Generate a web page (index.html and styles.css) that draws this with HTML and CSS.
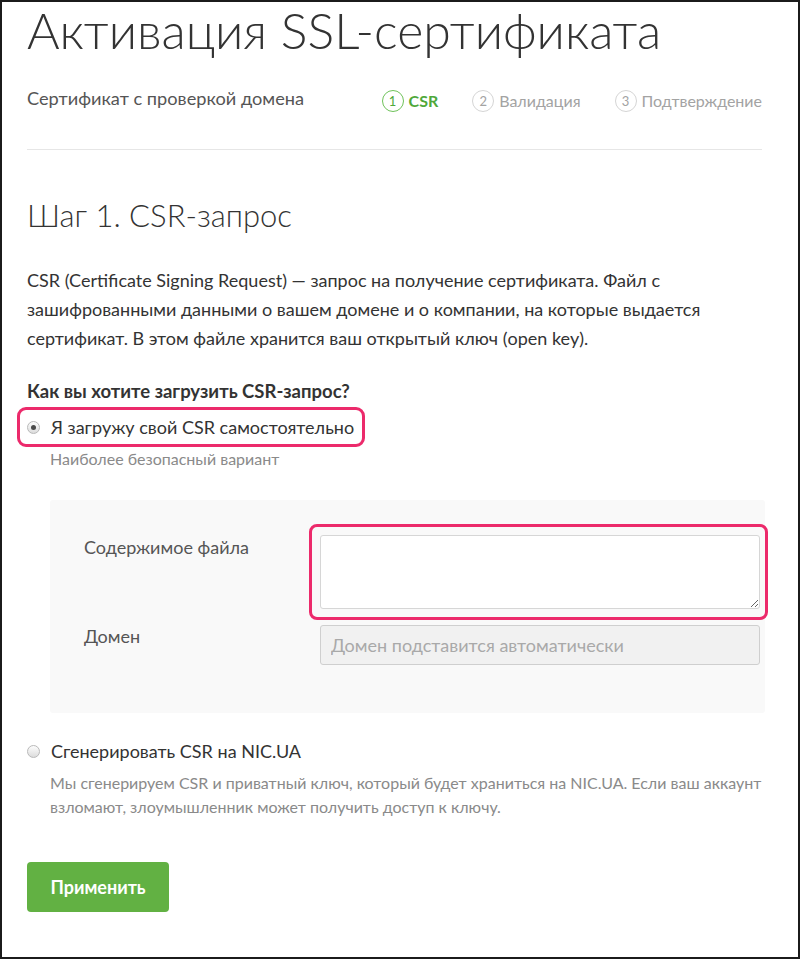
FILE: index.html
```html
<!DOCTYPE html>
<html lang="ru">
<head>
<meta charset="utf-8">
<title>Активация SSL-сертификата</title>
<link rel="stylesheet" href="styles.css">
</head>
<body>
<div class="frame">
  <h1 class="title">Активация SSL-сертификата</h1>
  <div class="subhead">
    <div class="subtitle">Сертификат с проверкой домена</div>
    <ol class="steps">
      <li class="step active"><span class="num">1</span><span class="label">CSR</span></li>
      <li class="step"><span class="num">2</span><span class="label">Валидация</span></li>
      <li class="step"><span class="num">3</span><span class="label">Подтверждение</span></li>
    </ol>
  </div>
  <hr class="divider">
  <h2 class="step-title">Шаг 1. CSR-запрос</h2>
  <p class="intro">CSR (Certificate Signing Request) — запрос на получение сертификата. Файл с зашифрованными данными о вашем домене и о компании, на которые выдается сертификат. В этом файле хранится ваш открытый ключ (open key).</p>
  <div class="question">Как вы хотите загрузить CSR-запрос?</div>

  <div class="option">
    <label class="choice highlighted"><span class="radio checked"></span><span class="choice-text">Я загружу свой CSR самостоятельно</span></label>
    <div class="hint">Наиболее безопасный вариант</div>
  </div>

  <div class="panel">
    <div class="field">
      <div class="field-label">Содержимое файла</div>
      <div class="field-control mark">
        <textarea class="textarea"></textarea>
      </div>
    </div>
    <div class="field">
      <div class="field-label domain-label">Домен</div>
      <div class="field-control">
        <input class="input" type="text" placeholder="Домен подставится автоматически" disabled>
      </div>
    </div>
  </div>

  <div class="option option-gen">
    <label class="choice"><span class="radio"></span><span class="choice-text">Сгенерировать CSR на NIC.UA</span></label>
    <div class="hint hint-long">Мы сгенерируем CSR и приватный ключ, который будет храниться на NIC.UA. Если ваш аккаунт взломают, злоумышленник может получить доступ к ключу.</div>
  </div>

  <button class="btn" type="button">Применить</button>
</div>
</body>
</html>
```
FILE: styles.css
```css
html, body {
  margin: 0;
  padding: 0;
  background: #fff;
}
body {
  font-family: Lato, "Open Sans", sans-serif;
  color: #333;
}
.frame {
  box-sizing: border-box;
  width: 800px;
  height: 959px;
  border: 2px solid #1b1b1b;
  padding: 0 36px 0 25px;
  overflow: hidden;
}
.title {
  margin: 0;
  font-weight: 300;
  font-size: 50px;
  line-height: 57px;
  color: #333;
}
.subhead {
  display: flex;
  align-items: flex-start;
  justify-content: space-between;
  margin-top: 28px;
}
.subtitle {
  font-size: 18.2px;
  line-height: 22px;
  color: #555;
}
.steps {
  list-style: none;
  margin: 3px 0 0;
  padding: 0;
  display: flex;
  gap: 34px;
}
.step {
  display: flex;
  align-items: center;
  gap: 5px;
  font-size: 16px;
  line-height: 22px;
  color: #a3a3a3;
}
.num {
  box-sizing: border-box;
  width: 22px;
  height: 22px;
  border: 1px solid #d5d5d5;
  border-radius: 50%;
  display: flex;
  align-items: center;
  justify-content: center;
  font-size: 13px;
  color: #a3a3a3;
}
.step.active .num {
  border-color: #6fc25a;
  color: #4fa83a;
}
.step.active .label {
  color: #4fa83a;
  font-weight: 700;
}
.divider {
  border: 0;
  border-top: 1px solid #e6e6e6;
  margin: 37px 0 0;
}
.step-title {
  margin: 47px 0 0;
  font-weight: 300;
  font-size: 31px;
  line-height: 36px;
  color: #333;
}
.intro {
  margin: 33px 0 0;
  font-size: 18px;
  line-height: 29px;
  color: #333;
}
.question {
  margin-top: 27px;
  font-size: 18.5px;
  line-height: 22px;
  font-weight: 700;
  color: #333;
}
.option {
  margin-top: 5px;
}
.choice {
  display: flex;
  width: max-content;
  align-items: center;
  gap: 11px;
  height: 40px;
  box-sizing: border-box;
  border: 3px solid transparent;
  border-radius: 9px;
  padding: 0 8px 0 7px;
  margin-left: -10px;
  font-size: 18px;
  color: #333;
}
.choice.highlighted {
  border-color: #ec2a6b;
}
.radio {
  position: relative;
  box-sizing: border-box;
  width: 13px;
  height: 13px;
  border-radius: 50%;
  border: 1px solid #b9b9b9;
  background: linear-gradient(#fdfdfd, #dcdcdc);
  flex: none;
}
.radio.checked::after {
  content: "";
  position: absolute;
  left: 3px;
  top: 3px;
  width: 5px;
  height: 5px;
  border-radius: 50%;
  background: #4a4a4a;
}
.hint {
  margin: 0 0 0 23px;
  font-size: 16px;
  line-height: 24px;
  color: #8a8a8a;
}
.panel {
  margin: 29px -3px 0 23px;
  background: #f9f9f9;
  border-radius: 3px;
  padding: 35px 5px 48px 34px;
  display: flex;
  flex-direction: column;
  gap: 16px;
}
.field {
  display: flex;
  align-items: flex-start;
}
.field-label {
  width: 236px;
  flex: none;
  font-size: 18px;
  line-height: 22px;
  color: #555;
  padding-top: 1px;
}
.domain-label {
  padding-top: 0;
}
.field-control {
  flex: 1;
  position: relative;
}
.mark::before {
  content: "";
  position: absolute;
  top: -11px;
  bottom: -11px;
  left: -11px;
  right: -8px;
  border: 3px solid #ec2a6b;
  border-radius: 8px;
  pointer-events: none;
}
.textarea {
  display: block;
  box-sizing: border-box;
  width: 100%;
  height: 74px;
  border: 1px solid #d6d6d6;
  border-radius: 3px;
  background: #fff;
  resize: vertical;
  font-family: inherit;
}
.input {
  display: block;
  box-sizing: border-box;
  width: 100%;
  height: 40px;
  border: 1px solid #cfcfcf;
  border-radius: 3px;
  background: #f1f1f1;
  padding: 0 10px;
  font-family: inherit;
  font-size: 18px;
}
.input::placeholder {
  color: #a9a9a9;
}
.option-gen {
  margin-top: 18px;
}
.btn {
  display: block;
  margin-top: 43px;
  width: 142px;
  height: 50px;
  border: 0;
  border-radius: 4px;
  background: #62b143;
  color: #fff;
  font-family: inherit;
  font-size: 18px;
  font-weight: 700;
  cursor: pointer;
}
```
